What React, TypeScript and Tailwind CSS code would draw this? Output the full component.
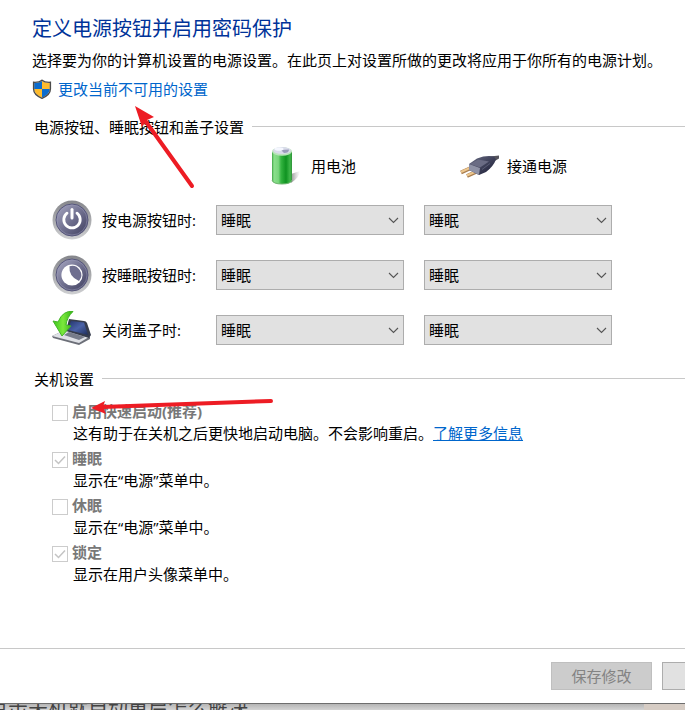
import type { ReactNode } from 'react';

const FONT = 'font-["Open_Sans","Noto_Sans_CJK_SC",sans-serif]';

function ShieldIcon() {
  return (
    <svg width="20" height="20" viewBox="0 0 20 20" aria-hidden="true">
      <defs>
        <clipPath id="shield">
          <path d="M10 2 C8 3.5 5 4 2.2 4 V10 C2.2 14 6 17 10 18.8 C14 17 17.800 14 17.800 10 V4 C15 4 12 3.500 10 2Z" />
        </clipPath>
      </defs>
      <g clipPath="url(#shield)">
        <path d="M0 0H10V10H0Z" fill="#0b6cce" />
        <path d="M10 0H20V10H10Z" fill="#fdbb2d" />
        <path d="M0 10H10V20H0Z" fill="#fdbb2d" />
        <path d="M10 10H20V20H10Z" fill="#0b6cce" />
      </g>
      <path d="M10 1.200 C8 3 5 3.500 1.600 3.300 V10 C1.600 14.500 6 17.600 10 19.300 C14 17.600 18.400 14.500 18.400 10 V3.300 C15 3.500 12 3 10 1.200Z" fill="none" stroke="#4b4b4b" strokeWidth="1.400" />
    </svg>
  );
}

function BatteryIcon() {
  return (
    <svg width="40" height="40" viewBox="0 0 40 40" aria-hidden="true">
      <defs>
        <linearGradient id="cell">
          <stop offset="0" stopColor="#3fa546" />
          <stop offset=".1" stopColor="#8be08c" />
          <stop offset=".32" stopColor="#79d57d" />
          <stop offset=".45" stopColor="#35b541" />
          <stop offset=".7" stopColor="#0f9321" />
          <stop offset=".9" stopColor="#40b84a" />
          <stop offset="1" stopColor="#2d9138" />
        </linearGradient>
        <linearGradient id="cellShadow">
          <stop offset="0" stopColor="#777" stopOpacity=".8" />
          <stop offset="1" stopColor="#aaa" stopOpacity="0" />
        </linearGradient>
      </defs>
      <path d="M27 28 L36 25 Q36 31 27 37Z" fill="url(#cellShadow)" />
      <path d="M8 6V34Q8 38 18 38T28 34V6Z" fill="url(#cell)" />
      <path d="M8 34Q9 38 18 38T28 34" fill="none" stroke="#6db36d" strokeWidth="1" />
      <ellipse cx="18" cy="5.500" rx="10" ry="4.200" fill="#b9e3ba" />
      <ellipse cx="18" cy="4.500" rx="8.800" ry="3.600" fill="#d9dbea" />
      <path d="M17 4L25 3.500Q25 7 20 7Z" fill="#9a9cba" />
      <ellipse cx="15" cy="3" rx="4.500" ry="1.800" fill="#f5f7ff" />
    </svg>
  );
}

function PlugIcon() {
  return (
    <svg width="40" height="40" viewBox="0 0 40 40" aria-hidden="true">
      <defs>
        <linearGradient id="plug" x1="0" y1="0" x2="1" y2="1">
          <stop offset="0" stopColor="#686b82" />
          <stop offset=".45" stopColor="#44475f" />
          <stop offset="1" stopColor="#171831" />
        </linearGradient>
      </defs>
      <path d="M1 26.500L12 21.500M7 30L18 25" stroke="#a87d50" strokeWidth="4" />
      <path d="M1 26L12 21M7 29.500L18 24.500" stroke="#edc78e" strokeWidth="2.200" />
      <path d="M30 10.500L39 9.500V12.500L33 16Z" fill="#55545c" />
      <path d="M9 18L17 12.500Q26 9 34 10.500L36 13.500Q33 21 26 26L19 29L9 24Z" fill="url(#plug)" />
      <path d="M9 18L20 22L19 29L9 24Z" fill="#8f92a6" />
      <path d="M10 18L18 13.500L29 15.500L20 21.500Z" fill="#6a6c84" />
      <path d="M22 23.500L30 17.500" stroke="#5a5d76" strokeWidth="1" />
    </svg>
  );
}

function RoundIcon({ id, children }: { id: string; children: ReactNode }) {
  return (
    <svg width="40" height="40" viewBox="0 0 40 40" aria-hidden="true">
      <defs>
        <linearGradient id={`${id}-ring`} x1="0" y1="0" x2="0" y2="1">
          <stop offset="0" stopColor="#85868b" />
          <stop offset=".5" stopColor="#a9aaad" />
          <stop offset="1" stopColor="#cfd0d2" />
        </linearGradient>
        <linearGradient id={`${id}-face`} x1="0" y1="0" x2="1" y2="1">
          <stop offset="0" stopColor="#a9a9c4" />
          <stop offset=".5" stopColor="#70708f" />
          <stop offset="1" stopColor="#3d3d5d" />
        </linearGradient>
      </defs>
      <circle cx="20" cy="20" r="19.500" fill={`url(#${id}-ring)`} />
      <circle cx="20" cy="20" r="16" fill={`url(#${id}-face)`} stroke="#55557a" strokeWidth="1" />
      <circle cx="20" cy="20" r="15" fill="none" stroke="#9a9ab8" strokeWidth="1" opacity=".5" />
      {children}
    </svg>
  );
}

function PowerIcon() {
  return (
    <RoundIcon id="power">
      <path d="M15 13.200A8.200 8.200 0 1 0 25 13.200" fill="none" stroke="#fff" strokeWidth="2.800" strokeLinecap="round" />
      <path d="M20 9.500V18" stroke="#fff" strokeWidth="3" strokeLinecap="round" />
    </RoundIcon>
  );
}

function MoonIcon() {
  return (
    <RoundIcon id="moon">
      <circle cx="20" cy="20" r="10.600" fill="#fff" />
      <path d="M17.500 11.200A9.200 9.200 0 0 1 27 26Q16.500 21.500 17.500 11.200Z" fill="#6f6f90" />
    </RoundIcon>
  );
}

function LidIcon() {
  return (
    <svg width="40" height="40" viewBox="0 0 40 40" aria-hidden="true">
      <defs>
        <linearGradient id="lid" x1="0" y1="0" x2="1" y2="1">
          <stop offset="0" stopColor="#23346b" />
          <stop offset=".5" stopColor="#4a62a8" />
          <stop offset="1" stopColor="#1d2c58" />
        </linearGradient>
        <linearGradient id="arrow">
          <stop offset="0" stopColor="#3cc41c" />
          <stop offset=".5" stopColor="#7be83c" />
          <stop offset="1" stopColor="#2fb012" />
        </linearGradient>
      </defs>
      <path d="M0 26L13 20L38 27V29L27 35L1 28Z" fill="#6c6f78" />
      <path d="M0 26L13 20L37 27L27 33Z" fill="#dfe1e6" />
      <path d="M12 25L17 22L33 27L27 30Z" fill="#777c8a" />
      <path d="M17 9L32 11Q34 11 35 13L39 25L37 28L14 21Z" fill="#353b4c" />
      <path d="M19 11L32 12.500L36 25L16 20Z" fill="url(#lid)" />
      <path d="M21 1.500Q11 0 6 12L1 11L10 26L19 16L14 15Q15 7 21 1.500Z" fill="url(#arrow)" stroke="#43b528" strokeWidth="1" />
    </svg>
  );
}

function SleepSelect({ label }: { label: string }) {
  return (
    <div className="relative w-[188px]">
      <select aria-label={label} className="block h-[30px] w-full appearance-none border border-[#adadad] bg-[#e1e1e1] px-1 text-[15px] leading-5 text-black">
        <option>睡眠</option>
        <option>休眠</option>
        <option>关机</option>
      </select>
      <svg className="pointer-events-none absolute top-3 right-1" width="12" height="8" viewBox="0 0 12 8" aria-hidden="true">
        <path d="M1 1L5.500 5.500L10 1" fill="none" stroke="#555" strokeWidth="1.100" />
      </svg>
    </div>
  );
}

function SettingRow({ icon, label }: { icon: ReactNode; label: string }) {
  return (
    <div className="flex h-[55px] items-center">
      {icon}
      <span className="ml-[10px] w-[114px] text-[15px] leading-5">{label}</span>
      <div className="flex gap-5">
        <SleepSelect label={`${label} 用电池`} />
        <SleepSelect label={`${label} 接通电源`} />
      </div>
    </div>
  );
}

function SectionTitle({ children }: { children: string }) {
  return (
    <div className="flex items-center gap-2 pl-[34px]">
      <h2 className="text-[15px] leading-5">{children}</h2>
      <div className="mb-[2px] h-px flex-1 bg-[#c8c8c8]" />
    </div>
  );
}

function ShutdownOption({ id, label, checked = false, children }: { id: string; label: string; checked?: boolean; children: ReactNode }) {
  return (
    <div className="h-[47px] text-[15px]">
      <div className="flex h-[22px] items-center gap-1">
        <span className="relative mt-1 h-4 w-4">
          <input id={id} type="checkbox" disabled defaultChecked={checked} className="peer block h-4 w-4 appearance-none border border-[#cccccc] bg-white" />
          <svg className="pointer-events-none absolute inset-0 hidden peer-checked:block" width="16" height="16" viewBox="0 0 16 16" aria-hidden="true">
            <path d="M3 8L6.500 11.500L13 4.500" fill="none" stroke="#c4c4c4" strokeWidth="1.500" />
          </svg>
        </span>
        <label htmlFor={id} className="leading-5 font-bold text-[#787878]">{label}</label>
      </div>
      <p className="pl-[21px] leading-[22px]">{children}</p>
    </div>
  );
}

export default function App() {
  return (
    <div className={`relative h-screen overflow-hidden bg-[#d8d8d8] text-black ${FONT}`}>
      <main className="border-b border-[#6e6e6e] bg-white pt-[13px]">
        <div className="px-8">
          <h1 className="text-[20px] leading-8 text-[#003399]">定义电源按钮并启用密码保护</h1>
          <p className="mt-[5px] text-[15px] leading-5 whitespace-nowrap">选择要为你的计算机设置的电源设置。在此页上对设置所做的更改将应用于你所有的电源计划。</p>
          <a href="#unlock" className="mt-[9px] flex w-fit items-center gap-[6px] text-[15px] leading-5 text-[#0066cc]">
            <ShieldIcon />
            更改当前不可用的设置
          </a>
        </div>

        <section className="mt-[18px]">
          <SectionTitle>电源按钮、睡眠按钮和盖子设置</SectionTitle>
          <div className="flex h-[55px] items-end pb-[6px] pl-[264px] text-[15px] leading-5">
            <div className="flex w-[196px] items-center gap-[7px]">
              <BatteryIcon />
              用电池
            </div>
            <div className="flex items-center gap-[7px]">
              <PlugIcon />
              接通电源
            </div>
          </div>
          <div className="pl-[52px]">
            <SettingRow icon={<PowerIcon />} label="按电源按钮时:" />
            <SettingRow icon={<MoonIcon />} label="按睡眠按钮时:" />
            <SettingRow icon={<LidIcon />} label="关闭盖子时:" />
          </div>
        </section>

        <section className="mt-3">
          <SectionTitle>关机设置</SectionTitle>
          <div className="mt-[11px] pl-[52px]">
            <ShutdownOption id="fast" label="启用快速启动(推荐)">
              这有助于在关机之后更快地启动电脑。不会影响重启。
              <a href="#more" className="text-[#0066cc] underline">了解更多信息</a>
            </ShutdownOption>
            <ShutdownOption id="sleep" label="睡眠" checked>显示在“电源”菜单中。</ShutdownOption>
            <ShutdownOption id="hibernate" label="休眠">显示在“电源”菜单中。</ShutdownOption>
            <ShutdownOption id="lock" label="锁定" checked>显示在用户头像菜单中。</ShutdownOption>
          </div>
        </section>

        <footer className="mt-[60px] flex h-[55px] justify-end gap-[10px] overflow-hidden border-t border-[#c8c8c8] pt-[13px] text-[15px]">
          <button disabled className="h-7 w-[101px] shrink-0 border border-[#bfbfbf] bg-[#cccccc] leading-5 text-[#838383]">保存修改</button>
          <button aria-label="取消" className="h-7 w-[23px] shrink-0 border border-r-0 border-[#adadad] bg-[#e1e1e1]" />
        </footer>
      </main>
      <div className="flex h-5 overflow-hidden bg-linear-to-b from-[#b5b5b5] to-[#dedede] to-40%">
        <p className="-mt-2 -ml-3 flex-1 text-[20px] leading-6 whitespace-nowrap text-[#444444]">点击关机就自动重启怎么解决</p>
        <div className="w-[41px] bg-[#d6ccc4]" />
      </div>

      <svg className="pointer-events-none absolute top-0 left-0" width="300" height="420" viewBox="0 0 300 420" aria-hidden="true">
        <path d="M192 186L144 119" stroke="#ed1c24" strokeWidth="4" strokeLinecap="round" />
        <path d="M135 106L154 117L147 120L142 127Z" fill="#ed1c24" />
        <path d="M271 401L102 407" stroke="#ed1c24" strokeWidth="4" strokeLinecap="round" />
        <path d="M91 408L105 401L103 407L106 414Z" fill="#ed1c24" />
      </svg>
    </div>
  );
}
